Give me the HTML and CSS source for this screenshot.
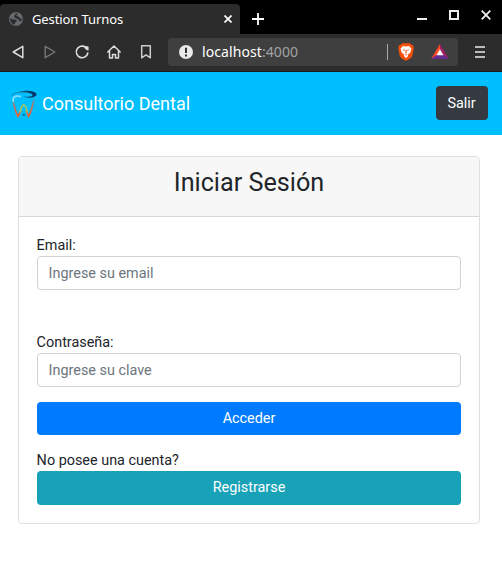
FILE: index.html
```html
<!DOCTYPE html>
<html lang="es">
<head>
<meta charset="utf-8">
<title>Gestion Turnos</title>
<link rel="stylesheet" href="styles.css">
</head>
<body>
<div class="tabstrip">
  <div class="tab">
    <svg class="globe" width="14" height="14" viewBox="0 0 14 14"><circle cx="7" cy="7" r="7" fill="#66696e"/><path d="M1.2 6.2 4 7.5l3 .2.8 1.8-1.9 1.2.1 1.8C3 12.4 1 9.7 1.2 6.2M7 1.2l1.8.3L7.500 3l.2 1.2 2 .4 1 1.8 2.1-.2c.1 1.4-.2 2.500-.8 3.400L10 8.500 9.200 7 6.800 6.400 5 4.800l.8-1.500z" fill="#2c2c2c"/></svg>
    <span class="tab-title">Gestion Turnos</span>
    <svg class="tab-close" width="8" height="8" viewBox="0 0 8 8"><path d="m.5.5 7 7m0-7-7 7" stroke="#fff" stroke-width="1.700"/></svg>
  </div>
  <svg class="new-tab" width="12" height="12" viewBox="0 0 12 12"><path d="M6 0v12M0 6h12" stroke="#fff" stroke-width="1.8"/></svg>
  <div class="window-buttons">
    <svg width="10" height="10" viewBox="0 0 10 10"><path d="M0 9h10" stroke="#eee" stroke-width="2"/></svg>
    <svg width="10" height="10" viewBox="0 0 10 10"><path d="M1 1h8v8H1z" fill="none" stroke="#eee" stroke-width="2"/></svg>
    <svg width="10" height="10" viewBox="0 0 10 10"><path d="m.7.7 8.6 8.6m0-8.600L.7 9.300" stroke="#eee" stroke-width="1.8"/></svg>
  </div>
</div>
<div class="toolbar">
  <div class="nav-icons">
    <svg width="16" height="16" viewBox="0 0 16 16"><path d="M12.8 2.3v11.4L3.2 8z" fill="none" stroke="#ddd" stroke-width="1.5" stroke-linejoin="round"/></svg>
    <svg width="16" height="16" viewBox="0 0 16 16"><path d="M3.2 2.3v11.4L12.8 8z" fill="none" stroke="#777" stroke-width="1.4" stroke-linejoin="round"/></svg>
    <svg width="16" height="16" viewBox="0 0 16 16"><path d="M11.5 3.2A5.8 5.8 0 1 0 13.8 9" fill="none" stroke="#ddd" stroke-width="1.6" stroke-linecap="round"/><path d="M10 2.2h3.8a.8.8 0 0 1 .8.8v3.6q-3.7-.4-4.6-4.4" fill="#ddd"/></svg>
    <svg width="16" height="16" viewBox="0 0 16 16"><path d="M1.8 8 8 2l6.2 6M3.5 7v7h3v-3.5h3V14h3V7" fill="none" stroke="#ddd" stroke-width="1.5" stroke-linecap="round" stroke-linejoin="round"/></svg>
    <svg width="16" height="16" viewBox="0 0 16 16"><path d="M3.7 1.8h8.6v12L8 10.8l-4.3 3z" fill="none" stroke="#ccc" stroke-width="1.5" stroke-linejoin="round"/></svg>
  </div>
  <div class="urlbar">
    <svg width="14" height="14" viewBox="0 0 14 14"><circle cx="7" cy="7" r="7" fill="#e9e9e9"/><path d="M7 2.7v5.4M7 9.4v2" stroke="#333" stroke-width="2"/></svg>
    <span class="url">localhost<span class="port">:4000</span></span>
    <span class="divider"></span>
    <svg class="shield" width="16" height="18" viewBox="0 0 16 18"><path d="M4 .3h8l1.4 1.5 1.8.8.5 3-1.5 7.3c-.7 2-3.5 3.4-6.2 4.9-2.7-1.5-5.5-2.9-6.2-4.9L.3 5.6l.5-3 1.8-.8z" fill="#f8500b"/><path d="m5 3 3 .6 3-.6 2.5 2.7-1.3 4-2.4 2 .3 1.3L8 15l-2.1-2 .3-1.3-2.4-2-1.3-4z" fill="#fff"/><path d="m4.2 6.2 2.7.5-.5 1.2zM11.8 6.2l-2.7.5.5 1.2zM7.5 7h1l.2 3L8 10.6 7.3 10zM5.8 10.5 8 11.8l2.2-1.3L8 12.8z" fill="#f8500b"/></svg>
    <svg class="bat" width="18" height="15" viewBox="0 0 18 15"><path d="M9 0 0 15l9-5z" fill="#ff4b25"/><path d="m9 0 9 15-9-5z" fill="#9e1f63"/><path d="M0 15h18l-5.5-4h-7z" fill="#662d91"/><path d="m9 5.3 3.5 5.9h-7z" fill="#fff"/></svg>
  </div>
  <svg class="menu" width="10" height="12" viewBox="0 0 10 12"><path d="M0 1h10M0 6h10M0 11h10" stroke="#bbb" stroke-width="2"/></svg>
</div>
<nav class="navbar">
  <a class="brand">
    <svg width="28" height="28" viewBox="0 0 28 28" fill="none">
      <defs><linearGradient id="root" gradientUnits="userSpaceOnUse" x1="0" y1="8" x2="0" y2="27"><stop stop-color="#19a9d6"/><stop offset=".35" stop-color="#a47a76"/><stop offset="1" stop-color="#ff5a1f"/></linearGradient></defs>
      <path d="M9 2C16-.3 24 .8 26.200 3.500 28 7 20 9 12 6.600 18 7.200 23.500 6.500 22.500 4.500 20 2.300 14 2.200 9 2" fill="#073665"/>
      <path d="M1.500 5.500C5 2.300 12 1.500 18 2.300" stroke="#247da8" stroke-width="1"/>
      <path d="M11 6.500C4.500 5 2.600 7 3.200 12" stroke="#92dfff" stroke-width="1.600"/>
      <path d="M3.300 12C4.500 17 5.500 22 8 26.300L11 20.500M24.200 9C22.500 15 21.500 21 18.700 26.300L16 20.500" stroke="url(#root)" stroke-width="1.700"/>
      <path d="M10 22.500C11 17 12 15 13.700 15S16.300 17 17.300 22.500" stroke="#b5c455" stroke-width="1.500"/>
      <path d="m12.500 24.500 1.200.7 1.200-.7" stroke="#176b92" stroke-width="1.500"/>
    </svg>
    <span>Consultorio Dental</span>
  </a>
  <button class="btn btn-dark">Salir</button>
</nav>
<main class="card">
  <div class="card-header"><h3>Iniciar Sesión</h3></div>
  <form class="card-body">
    <label for="email">Email:</label>
    <input class="email" id="email" type="email" placeholder="Ingrese su email">
    <label for="clave">Contraseña:</label>
    <input id="clave" type="password" placeholder="Ingrese su clave">
    <button class="btn btn-primary" type="button">Acceder</button>
    <span class="hint">No posee una cuenta?</span>
    <button class="btn btn-info" type="button">Registrarse</button>
  </form>
</main>
</body>
</html>
```

FILE: styles.css
```css
* { box-sizing: border-box; }
body {
  margin: 0;
  background: #fff;
  color: #212529;
  font: 14.4px/21.6px Roboto, sans-serif;
}
svg { display: block; flex: none; }
.tabstrip {
  display: flex;
  height: 34px;
  background: #000;
  padding-top: 4px;
}
.tab {
  display: flex;
  align-items: center;
  width: 240px;
  padding: 0 8px 0 9px;
  background: #2c2c2c;
  border-radius: 4px 4px 0 0;
  color: #fff;
  font: 13px/18px "Noto Sans", sans-serif;
}
.tab-title { flex: 1; margin-left: 9px; letter-spacing: -0.1px; }
.new-tab { margin: 9px 0 0 12px; }
.window-buttons {
  display: flex;
  gap: 22px;
  margin: 6px 11px 0 auto;
}
.toolbar {
  display: flex;
  align-items: center;
  height: 38px;
  padding: 0 17px 2px 10px;
  background: #2c2c2c;
  border-bottom: 1px solid #1b1b1b;
}
.nav-icons { display: flex; gap: 16px; }
.urlbar {
  display: flex;
  align-items: center;
  width: 290px;
  height: 28px;
  margin-left: 14px;
  padding: 0 9px 0 11px;
  background: #3f3f3f;
  border-radius: 4px;
  font: 14px/20px "Noto Sans", sans-serif;
  color: #fff;
}
.url { margin-left: 9px; letter-spacing: 0.08px; }
.port { color: #a3a3a3; }
.divider { width: 1px; height: 16px; margin-left: auto; background: #aaa; }
.shield { margin-left: 10px; }
.bat { margin-left: 17px; }
.menu { margin-left: auto; }
.navbar {
  display: flex;
  align-items: center;
  justify-content: space-between;
  height: 63px;
  padding: 0 14px 0 10px;
  background: #00bfff;
}
.brand {
  display: flex;
  align-items: center;
  gap: 4px;
  color: #fff;
  font-size: 18px;
  line-height: 27px;
}
.btn {
  height: 33px;
  padding: 0;
  border: 0;
  border-radius: 4px;
  color: #fff;
  font: inherit;
}
.btn-dark {
  width: 52px;
  height: 34px;
  margin-bottom: 1px;
  padding: 1px 1px 0 0;
  background: #343a40;
}
.card {
  margin: 21px 22px 0 18px;
  height: 368px;
  border: 1px solid #dfdfdf;
  border-radius: 4px;
  overflow: hidden;
}
.card-header {
  height: 60px;
  padding-top: 11px;
  background: #f7f7f7;
  border-bottom: 1px solid #d8d8d8;
  text-align: center;
}
h3 { margin: 0; font-size: 25.2px; line-height: 30px; font-weight: 400; }
.card-body { display: flex; flex-direction: column; padding: 17px 18px; }
label, .hint { height: 22px; margin-left: -0.4px; line-height: 24px; }
input {
  height: 34px;
  margin: 0 0 15px;
  padding: 0 10.6px;
  border: 1px solid #ced4da;
  border-radius: 4px;
  color: #495057;
  font: inherit;
}
input::placeholder { color: #6c757d; opacity: 1; }
.email { margin-bottom: 41px; }
.btn-primary { margin-bottom: 14px; background: #007bff; }
.btn-info { height: 34px; background: #17a2b8; }
```
